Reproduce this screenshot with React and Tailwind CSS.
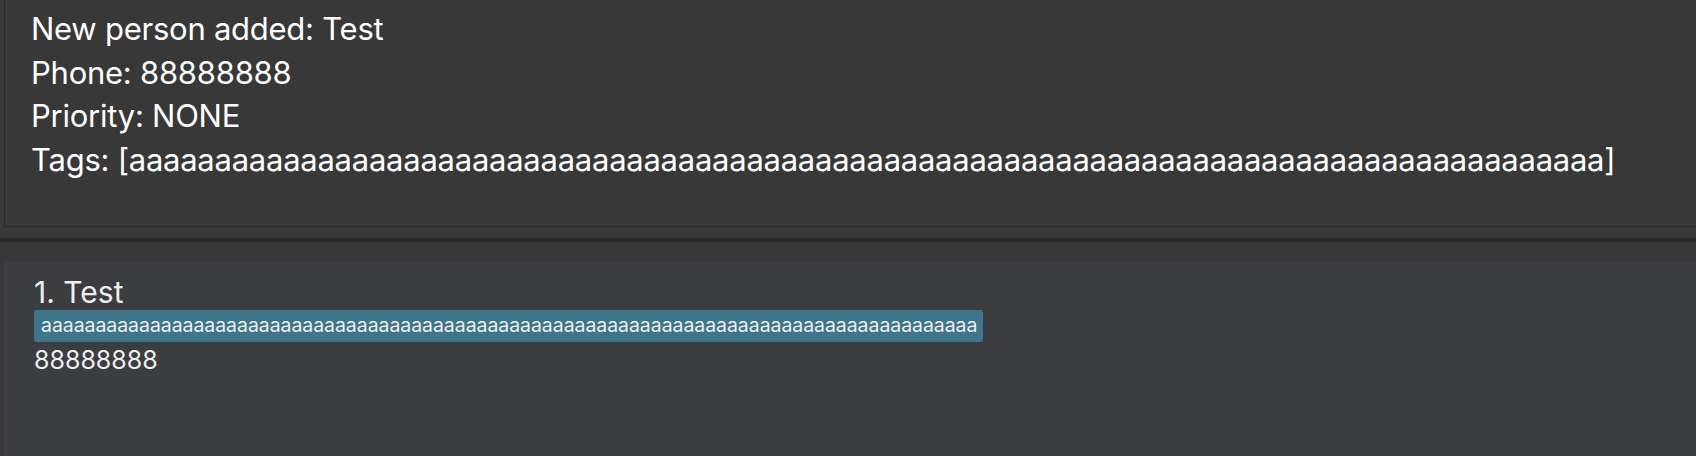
export default function App() {
  const tag = 'a'.repeat(86);
  return (
    <div
      className="w-[1696px] h-[456px] bg-[#383838] overflow-hidden flex flex-col text-white"
      style={{ fontFamily: 'Inter, "Noto Sans", sans-serif' }}
    >
      {/* Result display */}
      <div className="h-[227px] ml-[4px] -mr-[2px] border-l border-b border-[#2b2b2b] bg-[#383838] pl-[26px] pt-[7px] shrink-0">
        <div className="text-[31px] leading-[43.5px] tracking-[-0.25px]">
          <p>New person added: Test</p>
          <p>Phone: 88888888</p>
          <p>Priority: NONE</p>
          <p>Tags: [{tag}]</p>
        </div>
      </div>

      <div className="h-[11px] shrink-0" />
      <div className="h-[4px] bg-[#2b2b2b] shrink-0" />
      <div className="h-[20px] shrink-0" />

      {/* Person list */}
      <div className="flex-1 ml-[4px] bg-[#3c3d40] pl-[30px] pt-[12px]">
        <p className="text-[30px] leading-[36px] text-[#eeeeee]">1. Test</p>
        <div className="flex">
          <span className="bg-[#3e7589] rounded-[3px] pl-[7px] pr-[6px] h-[32px] flex items-center text-[19.4px] text-[#eeeeee]">
            {tag}
          </span>
        </div>
        <p className="text-[25px] leading-[30px] text-[#eeeeee] mt-[3px]">88888888</p>
      </div>
    </div>
  );
}
